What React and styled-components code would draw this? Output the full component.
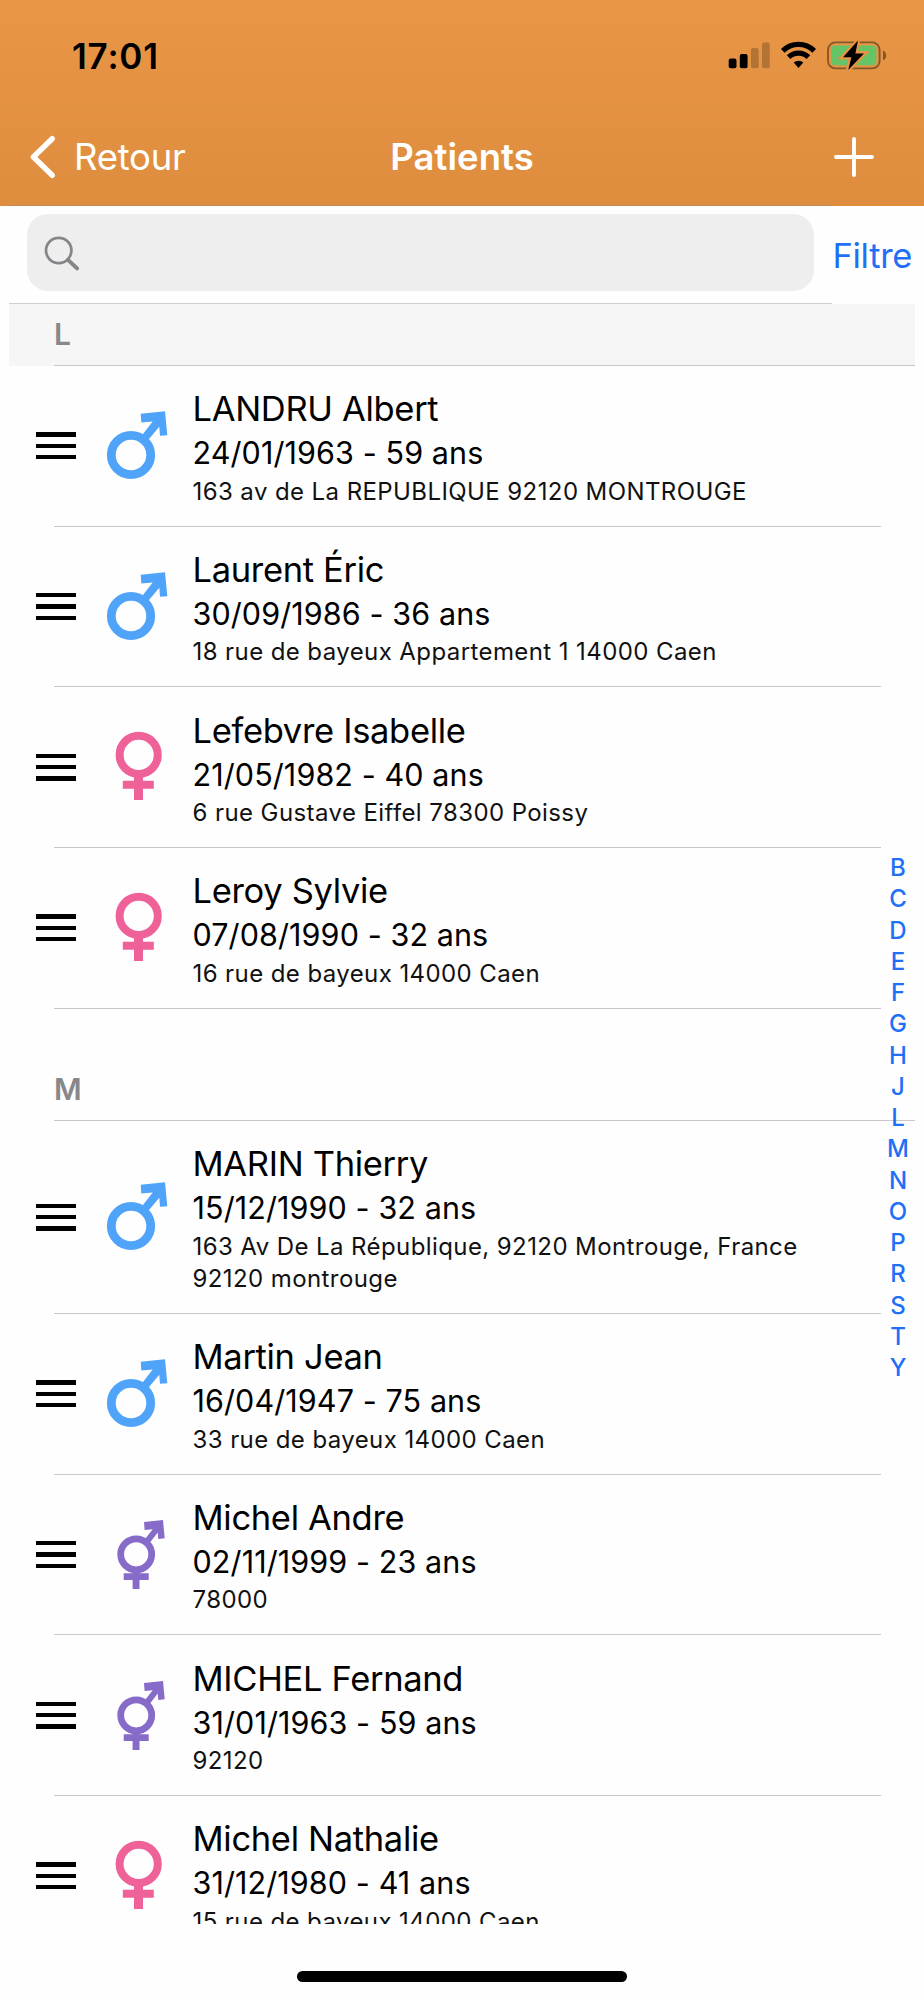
import React from "react";
import styled, { createGlobalStyle } from "styled-components";

const sections = [
  {
    letter: "L",
    pinned: true,
    patients: [
      { name: "LANDRU Albert", birth: "24/01/1963 - 59 ans", address: "163 av de La REPUBLIQUE 92120 MONTROUGE", gender: "male" },
      { name: "Laurent Éric", birth: "30/09/1986 - 36 ans", address: "18 rue de bayeux Appartement 1 14000 Caen", gender: "male" },
      { name: "Lefebvre Isabelle", birth: "21/05/1982 - 40 ans", address: "6 rue Gustave Eiffel 78300 Poissy", gender: "female" },
      { name: "Leroy Sylvie", birth: "07/08/1990 - 32 ans", address: "16 rue de bayeux 14000 Caen", gender: "female" },
    ],
  },
  {
    letter: "M",
    patients: [
      { name: "MARIN Thierry", birth: "15/12/1990 - 32 ans", address: "163 Av De La République, 92120 Montrouge, France\n92120 montrouge", gender: "male" },
      { name: "Martin Jean", birth: "16/04/1947 - 75 ans", address: "33 rue de bayeux 14000 Caen", gender: "male" },
      { name: "Michel Andre", birth: "02/11/1999 - 23 ans", address: "78000", gender: "other" },
      { name: "MICHEL Fernand", birth: "31/01/1963 - 59 ans", address: "92120", gender: "other" },
      { name: "Michel Nathalie", birth: "31/12/1980 - 41 ans", address: "15 rue de bayeux 14000 Caen", gender: "female" },
    ],
  },
];

const letters = "BCDEFGHJLMNOPRSTY".split("");

const GenderIcon = ({ gender }) => {
  if (gender === "male") {
    return (
      <GenderSvg viewBox="0 0 72 72">
        <circle cx="27" cy="45" r="19.7" fill="none" stroke="#4fa4fa" strokeWidth="8.8" />
        <path fill="#4fa4fa" d="M36.7 3.8 61 1.2 63.3 25.2 56 25.8 55.3 16.8 43.3 31 37.6 25.8 48.7 11.5 37.3 12.5Z" />
      </GenderSvg>
    );
  }
  if (gender === "female") {
    return (
      <GenderSvg viewBox="0 0 72 72">
        <circle cx="34.7" cy="23.9" r="19.1" fill="none" stroke="#ee6299" strokeWidth="8" />
        <path fill="#ee6299" d="M30 45H39V49.8H49.8V57.8H39V69H30V57.8H18.8V49.8H30Z" />
      </GenderSvg>
    );
  }
  return (
    <GenderSvg viewBox="0 0 72 72">
      <circle cx="32.2" cy="36.3" r="15.5" fill="none" stroke="#876bc8" strokeWidth="6.8" />
      <path fill="#876bc8" d="M40 4 59 2 60.7 20.2 54.3 21 53.7 14.6 45.3 25.4 40.9 21.2 48.7 11.3 40.6 12Z" />
      <path fill="#876bc8" d="M28.6 54H35.5V55.3H44.7V62H35.5V71H28.6V62H19.7V55.3H28.6Z" />
    </GenderSvg>
  );
};

const StatusIcons = () => (
  <StatusSvg viewBox="0 0 160 32">
    <rect x="0.7" y="18.5" width="7.8" height="9.7" rx="2" />
    <rect x="11.8" y="14" width="7.8" height="14.2" rx="2" />
    <rect x="22.9" y="8" width="7.8" height="20.2" rx="2" opacity="0.22" />
    <rect x="34" y="2.6" width="7.8" height="25.6" rx="2" opacity="0.22" />
    <g fill="none" stroke="#000" strokeWidth="5.2">
      <path d="M54.8 10.8a22.3 22.3 0 0 1 31.4 0" />
      <path d="M60.6 17.2a14.2 14.2 0 0 1 19.8 0" />
    </g>
    <path d="M65.7 22.6a7 7 0 0 1 9.6 0L70.5 28Z" />
    <rect x="100" y="2.4" width="51.6" height="26" rx="7.5" fill="none" stroke="#85582a" strokeWidth="1.9" />
    <rect x="103" y="5.5" width="45.4" height="19.8" rx="4" fill="#65c466" />
    <path d="M155 10.6q3.2 1.4 3.2 4.8t-3.2 4.8Z" fill="#85582a" />
    <path d="M129.8 1.2 114.4 17.4H123L120.2 29.8 136.6 13.2H127.6Z" fill="none" stroke="#e59443" strokeWidth="4.4" />
    <path d="M130 .6 115 17.2H123.4L120.2 30 136 13.4H127.4Z" />
  </StatusSvg>
);

const Patient = ({ patient }) => (
  <Row>
    <Handle>
      <Bar />
      <Bar />
      <Bar />
    </Handle>
    <GenderIcon gender={patient.gender} />
    <Infos>
      <Name>{patient.name}</Name>
      <Birth>{patient.birth}</Birth>
      <Address>{patient.address}</Address>
    </Infos>
  </Row>
);

const App = () => (
  <Screen>
    <GlobalStyle />
    <Header>
      <StatusBar>
        <Time>17:01</Time>
        <StatusIcons />
      </StatusBar>
      <NavBar>
        <BackButton>
          <svg width="26" height="44" viewBox="0 0 26 44">
            <path d="M22.2 3.7 3.4 22 22.2 40.3" fill="none" stroke="#fff" strokeWidth="5.4" strokeLinecap="round" strokeLinejoin="round" />
          </svg>
          <span>Retour</span>
        </BackButton>
        <Title>Patients</Title>
        <AddButton aria-label="Ajouter">
          <svg width="40" height="40" viewBox="0 0 40 40">
            <path d="M20 2V38M2 20H38" stroke="#fff" strokeWidth="3.9" strokeLinecap="round" />
          </svg>
        </AddButton>
      </NavBar>
    </Header>
    <SearchRow>
      <SearchBar>
        <SearchField>
          <svg width="36" height="36" viewBox="0 0 36 36">
            <circle cx="15.7" cy="15.5" r="12.7" fill="none" stroke="#86868a" strokeWidth="2.7" />
            <path d="M25 24.9 34 33.4" stroke="#86868a" strokeWidth="4" strokeLinecap="round" />
          </svg>
        </SearchField>
      </SearchBar>
      <FilterButton>Filtre</FilterButton>
    </SearchRow>
    <List>
      {sections.map((section) => (
        <section key={section.letter}>
          <SectionHeader $pinned={section.pinned}>
            <SectionLetter>{section.letter}</SectionLetter>
          </SectionHeader>
          {section.patients.map((patient) => (
            <Patient key={patient.name} patient={patient} />
          ))}
        </section>
      ))}
    </List>
    <HomeArea>
      <HomeIndicator />
    </HomeArea>
    <LetterIndex>
      {letters.map((letter) => (
        <li key={letter}>{letter}</li>
      ))}
    </LetterIndex>
  </Screen>
);

const GlobalStyle = createGlobalStyle`
  * {
    box-sizing: border-box;
  }
  body {
    margin: 0;
    background-color: #fefefe;
    font-family: Inter, "Liberation Sans", sans-serif;
  }
  p, h1, h2, ul {
    margin: 0;
    padding: 0;
  }
  button {
    border: none;
    background: none;
    padding: 0;
    font-family: inherit;
  }
`;

const Screen = styled.div`
  position: relative;
  width: 924px;
  height: 2000px;
  display: flex;
  flex-direction: column;
  overflow: hidden;
  color: #000;
`;

const Header = styled.header`
  height: 206px;
  flex: none;
  background: linear-gradient(#e99747, #de8c3d);
`;

const StatusBar = styled.div`
  display: flex;
  justify-content: space-between;
  align-items: center;
  height: 111px;
  padding: 0 36px 0 72px;
`;

const Time = styled.p`
  font-size: 35px;
  font-weight: 600;
  letter-spacing: 0.8px;
`;

const StatusSvg = styled.svg`
  width: 160px;
  height: 32px;
`;

const NavBar = styled.nav`
  display: grid;
  grid-template-columns: 1fr auto 1fr;
  align-items: center;
  height: 92px;
  padding: 0 30px;
`;

const BackButton = styled.button`
  display: flex;
  align-items: center;
  gap: 18px;
  color: #fff;
  font-size: 36.5px;
  letter-spacing: -0.25px;
`;

const Title = styled.h1`
  color: #fff;
  font-size: 36.5px;
  font-weight: 600;
  letter-spacing: 0.05px;
`;

const AddButton = styled.button`
  display: flex;
  justify-self: end;
  margin-right: 20px;
`;

const SearchRow = styled.div`
  display: flex;
  flex: none;
  height: 98px;
`;

const SearchBar = styled.div`
  width: 823px;
  margin: -1px 0 0 9px;
  padding: 8px 18px 0;
  border-top: 1px solid #bd8d60;
  border-bottom: 1px solid #cfcfcf;
`;

const SearchField = styled.div`
  display: flex;
  align-items: center;
  height: 77px;
  padding-left: 16px;
  border-radius: 21px;
  background-color: #eeeeee;
`;

const FilterButton = styled.button`
  margin-left: 0.5px;
  color: #1f70f6;
  font-size: 34.5px;
  letter-spacing: -0.3px;
`;

// cuts off the last row above the home indicator
const List = styled.main`
  height: 1620px;
  flex: none;
  overflow: hidden;
`;

const SectionHeader = styled.div`
  display: flex;
  align-items: flex-end;
  height: ${({ $pinned }) => ($pinned ? "62px" : "112.5px")};
  margin: 0 9px;
  padding-left: 45px;
  background-color: ${({ $pinned }) => ($pinned ? "#f6f6f6" : "transparent")};
`;

const SectionLetter = styled.h2`
  flex: 1;
  height: 63px;
  border-bottom: 1px solid #c8c8c9;
  color: #88888b;
  font-size: 30px;
  font-weight: 600;
  line-height: 62px;
`;

const Row = styled.article`
  display: flex;
  align-items: center;
  width: 827px;
  min-height: 160.7px;
  margin-left: 54px;
  border-bottom: 1px solid #c8c8c9;
`;

const Handle = styled.div`
  display: flex;
  flex-direction: column;
  gap: 7px;
  width: 40px;
  margin-left: -18px;
`;

const Bar = styled.span`
  height: 4.3px;
  background-color: #000;
`;

const GenderSvg = styled.svg`
  width: 72px;
  height: 72px;
  margin-left: 28px;
`;

const Infos = styled.div`
  margin-left: 16.5px;
  padding: 21px 0 17.3px;
`;

const Name = styled.p`
  font-size: 34.5px;
  line-height: 44px;
  letter-spacing: -0.32px;
`;

const Birth = styled.p`
  font-size: 30.5px;
  line-height: 44px;
  letter-spacing: 0.1px;
`;

const Address = styled.p`
  padding-top: 0.6px;
  color: #111;
  font-size: 24px;
  line-height: 32.4px;
  letter-spacing: 0.41px;
  white-space: pre-line;
`;

const HomeArea = styled.footer`
  display: flex;
  justify-content: center;
  padding-top: 47px;
`;

const HomeIndicator = styled.div`
  width: 330px;
  height: 11px;
  border-radius: 6px;
  background-color: #000;
`;

// floats over the right edge of the list
const LetterIndex = styled.ul`
  position: absolute;
  top: 852px;
  right: 10px;
  width: 32px;
  list-style: none;
  color: #1f70f6;
  font-size: 24px;
  font-weight: 500;
  line-height: 31.26px;
  text-align: center;
`;

export default App;
